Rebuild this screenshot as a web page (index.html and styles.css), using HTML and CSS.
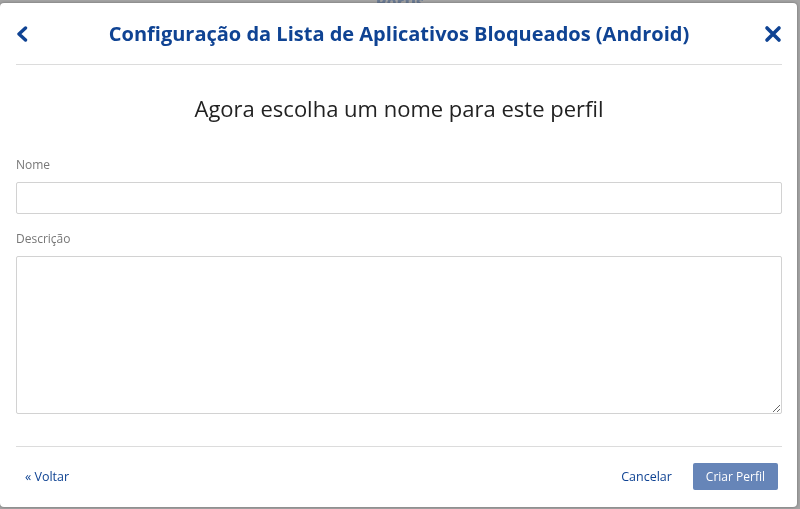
FILE: index.html
```html
<!DOCTYPE html>
<html lang="pt">
<head>
<meta charset="utf-8">
<link rel="stylesheet" href="styles.css">
</head>
<body>
<div class="behind"><h1 class="behind-title">Perfis</h1></div>
<div class="modal">
  <header class="modal-header">
    <button class="icon-btn back-btn" aria-label="Voltar">
      <svg width="12" height="16" viewBox="0 0 12 16"><path d="M9.5 2 L3 8 L9.5 14" fill="none" stroke="#0f4393" stroke-width="3.4" stroke-linecap="round" stroke-linejoin="round"/></svg>
    </button>
    <h2 class="modal-title">Configuração da Lista de Aplicativos Bloqueados (Android)</h2>
    <button class="icon-btn" aria-label="Fechar">
      <svg width="18" height="18" viewBox="0 0 18 18"><path d="M3 3 L15 15 M15 3 L3 15" fill="none" stroke="#0f4393" stroke-width="3.6" stroke-linecap="round"/></svg>
    </button>
  </header>
  <h3 class="step-title">Agora escolha um nome para este perfil</h3>
  <div class="field">
    <label class="field-label">Nome</label>
    <input class="field-input" type="text">
  </div>
  <div class="field">
    <label class="field-label">Descrição</label>
    <textarea class="field-area"></textarea>
  </div>
  <footer class="modal-footer">
    <a class="link back-link">« Voltar</a>
    <div class="actions">
      <a class="link">Cancelar</a>
      <button class="primary-btn">Criar Perfil</button>
    </div>
  </footer>
</div>
</body>
</html>
```
FILE: styles.css
```css
html, body {
  margin: 0;
  height: 100%;
}
body {
  background: #a4a4a4;
  font-family: "Open Sans", "Noto Sans", sans-serif;
  overflow: hidden;
}
.behind {
  display: flex;
  justify-content: center;
}
.behind-title {
  margin: -14px 0 0 0;
  font-size: 22px;
  font-weight: 700;
  color: #5e7291;
  font-stretch: 87.5%;
  filter: blur(0.6px);
  opacity: 0.8;
}
.modal {
  position: fixed;
  left: 0;
  top: 3px;
  width: 797px;
  height: 504px;
  box-sizing: border-box;
  background: #fff;
  border-radius: 4px;
  padding: 0 15px 0 16px;
  box-shadow: 0 0 3px rgba(0,0,0,0.35);
  display: flex;
  flex-direction: column;
}
.modal-header {
  height: 62px;
  box-sizing: border-box;
  border-bottom: 1px solid #dcdcdc;
  display: flex;
  align-items: center;
  gap: 8px;
}
.icon-btn {
  border: 0;
  background: none;
  padding: 0;
  width: 18px;
  height: 20px;
  display: flex;
  align-items: center;
  justify-content: center;
  cursor: pointer;
}
.back-btn {
  justify-content: flex-start;
}
.modal-title {
  flex: 1;
  margin: 0;
  text-align: center;
  font-size: 20px;
  font-weight: 700;
  color: #0f4393;
  padding-bottom: 1px;
}
.step-title {
  margin: 29px 0 0 0;
  text-align: center;
  font-size: 22px;
  line-height: 28px;
  font-weight: 400;
  color: #222;
}
.field {
  display: flex;
  flex-direction: column;
}
.field-label {
  font-size: 12px;
  line-height: 16px;
  color: #777;
  margin: 35px 0 9px;
}
.field + .field .field-label {
  margin-top: 17px;
}
.field-input {
  height: 32px;
  box-sizing: border-box;
  border: 1px solid #d2d2d2;
  border-radius: 2px;
  margin: 0;
  font: inherit;
}
.field-area {
  height: 158px;
  box-sizing: border-box;
  border: 1px solid #d2d2d2;
  border-radius: 2px;
  margin: 0;
  resize: vertical;
  font: inherit;
}
.modal-footer {
  margin-top: 32px;
  border-top: 1px solid #dcdcdc;
  display: flex;
  align-items: center;
  justify-content: space-between;
  padding: 16px 4px 0 9px;
}
.link {
  font-size: 12.5px;
  line-height: 27px;
  color: #0f4393;
  cursor: pointer;
}
.actions {
  display: flex;
  align-items: center;
  gap: 21px;
}
.primary-btn {
  background: #6685b8;
  color: #fff;
  border: 0;
  border-radius: 2px;
  height: 27px;
  padding: 0 13px;
  font-family: inherit;
  font-size: 12px;
}
```
